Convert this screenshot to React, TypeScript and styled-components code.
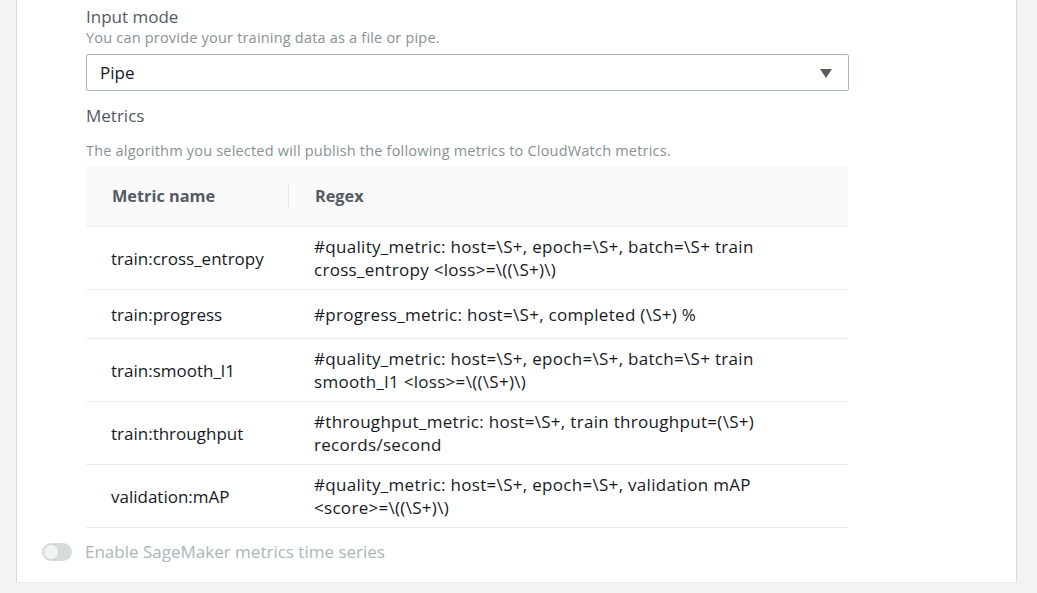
import styled, { createGlobalStyle } from "styled-components";

const GlobalStyle = createGlobalStyle`
  html, body {
    margin: 0;
    padding: 0;
    background: #f2f3f3;
    font-family: "Open Sans", "Liberation Sans", sans-serif;
    color: #16191f;
  }
`;

const Page = styled.div`
  display: flex;
  height: 593px;
  overflow: hidden;
  padding: 0 20px 0 16px;
`;

const Panel = styled.div`
  flex: 1;
  height: 583px;
  background: #ffffff;
  border-left: 1px solid #d5dbdb;
  border-right: 1px solid #d5dbdb;
  border-bottom: 1px solid #eaeded;
  box-sizing: border-box;
  padding: 5px 0 0 25px;
  display: flex;
  flex-direction: column;
`;

const Section = styled.div`
  padding-left: 44px;
  width: 763px;
`;

const Label = styled.div`
  font-size: 17px;
  line-height: 23px;
  color: #545b64;
`;

const Hint = styled.div<{ $gap?: number }>`
  font-size: 14.5px;
  letter-spacing: 0.2px;
  line-height: 20px;
  color: #879196;
  margin-top: ${(p) => p.$gap ?? 0}px;
`;

const Select = styled.div`
  margin-top: 6px;
  height: 37px;
  box-sizing: border-box;
  border: 1px solid #aab7b8;
  border-radius: 2px;
  display: flex;
  align-items: center;
  justify-content: space-between;
  padding: 0 16px 0 13px;
  font-size: 17px;
  color: #16191f;
`;

const Arrow = styled.span`
  width: 0;
  height: 0;
  border-left: 6.5px solid transparent;
  border-right: 6.5px solid transparent;
  border-top: 9px solid #545b64;
  margin-top: 1px;
`;

const MetricsLabel = styled(Label)`
  margin-top: 13px;
`;

const Table = styled.div`
  margin-top: 5px;
  width: 762px;
`;

const HeadRow = styled.div`
  display: grid;
  grid-template-columns: 202px 1fr;
  height: 60px;
  background: #fafafa;
  border-bottom: 1px solid #eaeded;
  align-items: center;
`;

const HeadCell = styled.div<{ $divider?: boolean }>`
  font-size: 16.3px;
  font-weight: 700;
  color: #545b64;
  padding-left: 26px;
  height: 28px;
  line-height: 28px;
  border-left: ${(p) => (p.$divider ? "1px solid #eaeded" : "none")};
`;

const Row = styled.div<{ $tall?: boolean }>`
  display: grid;
  grid-template-columns: 228px 1fr;
  min-height: ${(p) => (p.$tall ? 62 : 48)}px;
  border-bottom: 1px solid #eaeded;
  align-items: center;
  font-size: 17px;
  line-height: 23px;
  color: #16191f;
`;

const NameCell = styled.div`
  padding-left: 25px;
`;

const RegexCell = styled.div`
  max-width: 452px;
  letter-spacing: 0.3px;
`;

const ToggleRow = styled.div`
  display: flex;
  align-items: center;
  gap: 13px;
  margin-top: 12px;
`;

const Track = styled.div`
  width: 30px;
  height: 18px;
  border-radius: 9px;
  background: #d5dbdb;
  position: relative;
`;

const Knob = styled.div`
  position: absolute;
  left: 2px;
  top: 2px;
  width: 14px;
  height: 14px;
  border-radius: 50%;
  background: #f2f3f3;
`;

const ToggleText = styled.span`
  font-size: 17px;
  color: #aab7b8;
`;

const metrics = [
  {
    name: "train:cross_entropy",
    regex: "#quality_metric: host=\\S+, epoch=\\S+, batch=\\S+ train cross_entropy <loss>=\\((\\S+)\\)",
    tall: true,
  },
  { name: "train:progress", regex: "#progress_metric: host=\\S+, completed (\\S+) %" },
  {
    name: "train:smooth_l1",
    regex: "#quality_metric: host=\\S+, epoch=\\S+, batch=\\S+ train smooth_l1 <loss>=\\((\\S+)\\)",
    tall: true,
  },
  {
    name: "train:throughput",
    regex: "#throughput_metric: host=\\S+, train throughput=(\\S+) records/second",
    tall: true,
  },
  {
    name: "validation:mAP",
    regex: "#quality_metric: host=\\S+, epoch=\\S+, validation mAP <score>=\\((\\S+)\\)",
    tall: true,
  },
];

export default function App() {
  return (
    <>
      <GlobalStyle />
      <Page>
        <Panel>
          <Section>
            <Label>Input mode</Label>
            <Hint>You can provide your training data as a file or pipe.</Hint>
            <Select>
              <span>Pipe</span>
              <Arrow />
            </Select>
            <MetricsLabel>Metrics</MetricsLabel>
            <Hint $gap={14}>
              The algorithm you selected will publish the following metrics to CloudWatch metrics.
            </Hint>
            <Table>
              <HeadRow>
                <HeadCell>Metric name</HeadCell>
                <HeadCell $divider>Regex</HeadCell>
              </HeadRow>
              {metrics.map((m) => (
                <Row key={m.name} $tall={m.tall}>
                  <NameCell>{m.name}</NameCell>
                  <RegexCell>{m.regex}</RegexCell>
                </Row>
              ))}
            </Table>
          </Section>
          <ToggleRow>
            <Track>
              <Knob />
            </Track>
            <ToggleText>Enable SageMaker metrics time series</ToggleText>
          </ToggleRow>
        </Panel>
      </Page>
    </>
  );
}
